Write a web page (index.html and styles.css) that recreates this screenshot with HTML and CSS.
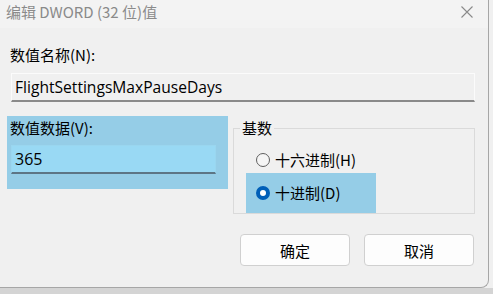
FILE: index.html
```html
<!DOCTYPE html>
<html lang="zh-CN">
<head>
<meta charset="utf-8">
<link rel="stylesheet" href="styles.css">
</head>
<body>
<div class="window">
  <div class="titlebar">
    <span class="title">编辑 DWORD (32 位)值</span>
    <span class="close"><svg width="12" height="12" viewBox="0 0 12 12"><path d="M0.5 0.5 L11.5 11.5 M11.5 0.5 L0.5 11.5" stroke="#8a8a8a" stroke-width="1.1" fill="none"/></svg></span>
  </div>
  <div class="content">
    <div class="label name-label">数值名称(N):</div>
    <div class="field name-field">FlightSettingsMaxPauseDays</div>
    <div class="row">
      <div class="data-panel">
        <div class="label">数值数据(V):</div>
        <div class="field data-field">365</div>
      </div>
      <fieldset class="base-group">
        <legend class="legend">基数</legend>
        <div class="radio-row first">
          <span class="radio"></span><span class="radio-text">十六进制(H)</span>
        </div>
        <div class="radio-row selected">
          <span class="radio checked"></span><span class="radio-text">十进制(D)</span>
        </div>
      </fieldset>
    </div>
    <div class="buttons">
      <div class="btn">确定</div>
      <div class="btn">取消</div>
    </div>
  </div>
</div>
</body>
</html>
```
FILE: styles.css
```css
html {
  background: linear-gradient(to bottom, #f0f0f0 0, #f0f0f0 288px, #d4d4d4 288px);
  height: 100%;
}
body {
  margin: 0;
  font-family: "Noto Sans CJK SC", "Noto Sans", sans-serif;
  font-size: 15px;
  color: #000;
}
.window {
  width: 488px;
  height: 287px;
  background: #f0f0f0;
  border-right: 1px solid #a6a6a6;
  border-bottom: 1px solid #a6a6a6;
  border-bottom-right-radius: 8px;
  box-sizing: content-box;
}
.titlebar {
  height: 28px;
  background: #f3f3f3;
  display: flex;
  align-items: center;
  justify-content: space-between;
}
.title {
  padding-left: 6px;
  color: #8a8a8a;
  font-size: 15px;
  line-height: 20px;
  margin-top: -5px;
}
.close {
  display: flex;
  margin-right: 15px;
  margin-top: -5px;
}
.content {
  padding-left: 10px;
}
.label {
  line-height: 20px;
}
.name-label {
  margin-top: 17px;
}
.field {
  box-sizing: border-box;
  height: 29px;
  border: 1px solid #fbfbfb;
  border-bottom: 2px solid #8a8a8a;
  padding-left: 3px;
  line-height: 26px;
  font-family: "Open Sans", "Noto Sans", sans-serif;
  font-size: 15.6px;
}
.name-field {
  margin-top: 8px;
  margin-left: 1px;
  width: 464px;
  background: #f0f0f0;
}
.row {
  display: flex;
  margin-top: 14px;
  margin-left: -3px;
}
.data-panel {
  width: 221px;
  height: 73px;
  background: #95cde7;
  padding-left: 3px;
  box-sizing: border-box;
}
.data-panel .label {
  margin-top: 2px;
}
.data-field {
  margin-top: 7px;
  margin-left: 1px;
  width: 205px;
  background: #99d9f4;
  border: 1px solid #9ad6ef;
  border-bottom: 2px solid #5d7585;
  font-size: 16px;
}
.base-group {
  margin: 2px 0 0 5px;
  padding: 0;
  width: 242px;
  box-sizing: border-box;
  border: 1px solid #dadada;
  min-width: 0;
}
.legend {
  margin-left: 6px;
  padding: 0 2px;
  line-height: 20px;
}
.radio-row {
  display: flex;
  align-items: center;
  margin-left: 12px;
  width: 130px;
  padding-left: 10px;
  box-sizing: border-box;
  gap: 5px;
}
.radio-row.first {
  height: 26px;
  margin-top: 9px;
}
.radio-row.selected {
  height: 40px;
  background: #95cde7;
}
.radio {
  width: 14px;
  height: 14px;
  border-radius: 50%;
  border: 1px solid #5f5f5f;
  box-sizing: border-box;
  background: #f5f5f5;
}
.radio.checked {
  border: 4px solid #005fb8;
  background: #ffffff;
}
.radio-text {
  line-height: 20px;
}
.buttons {
  display: flex;
  justify-content: flex-end;
  gap: 14px;
  margin-top: 20px;
  width: 464px;
}
.btn {
  width: 110px;
  height: 32px;
  box-sizing: border-box;
  background: #fdfdfd;
  border: 1px solid #d0d0d0;
  border-radius: 4px;
  display: flex;
  align-items: center;
  justify-content: center;
}
```
